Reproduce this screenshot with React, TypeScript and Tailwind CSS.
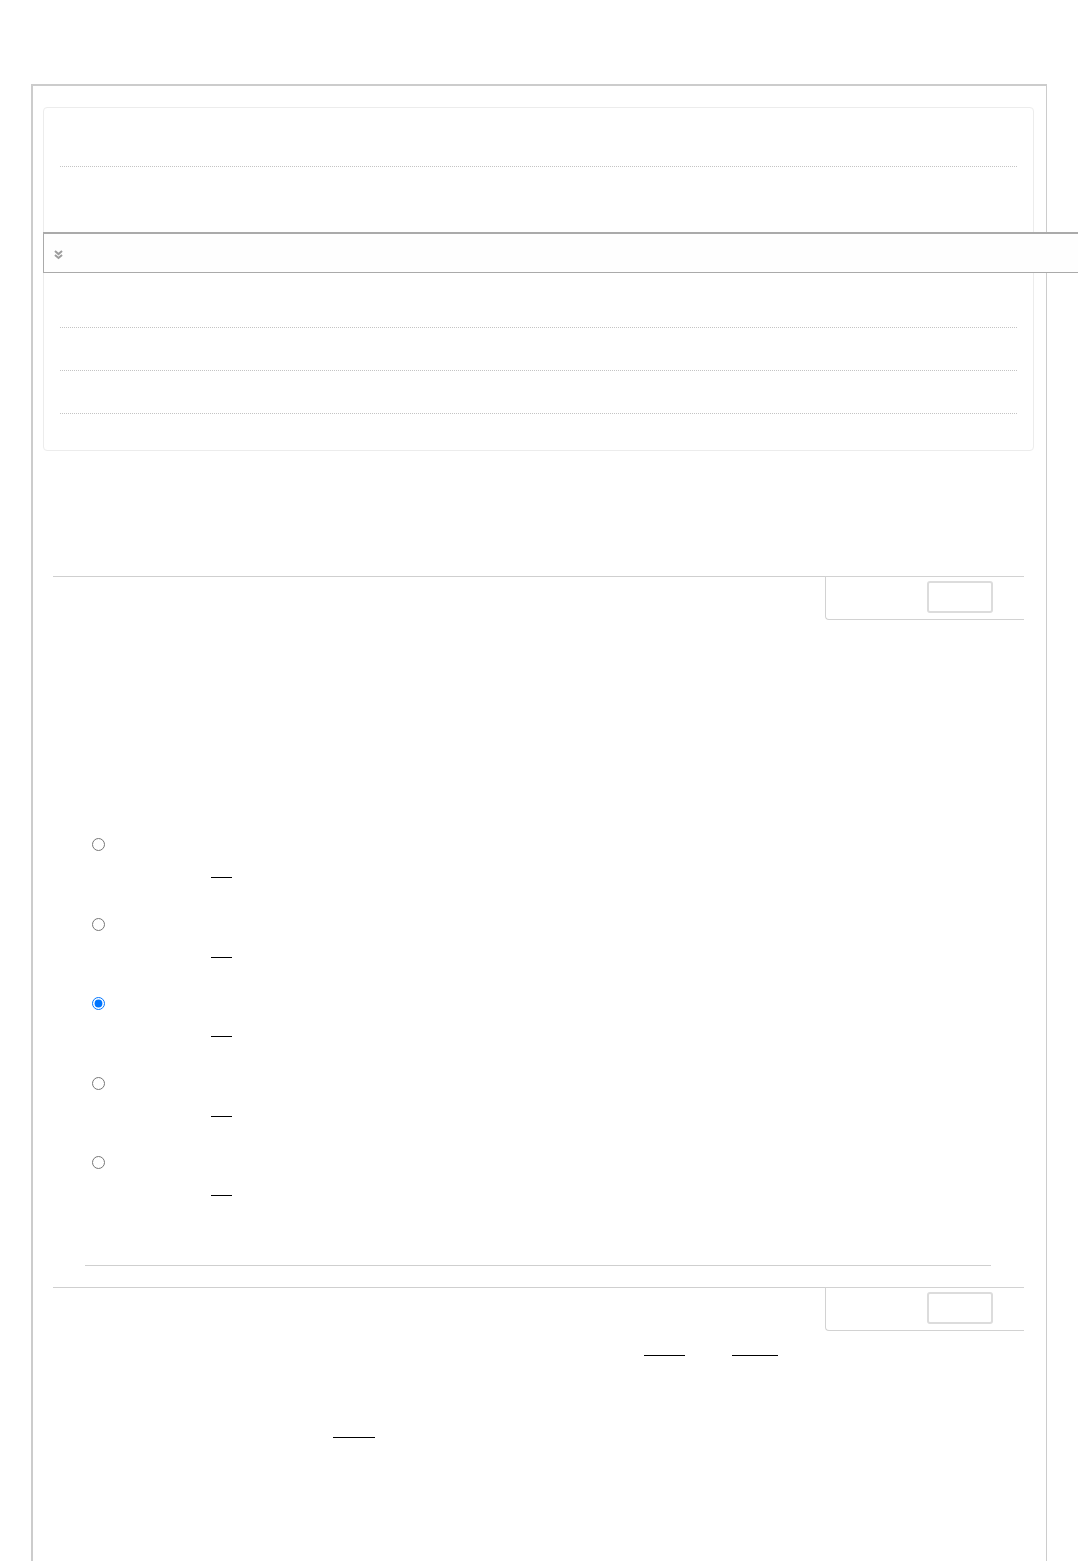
import React from 'react';

function Blank({ w }: { w: number }) {
  return <span className="inline-block h-[1px] bg-black align-bottom" style={{ width: w }} />;
}

function Tab() {
  return (
    <div className="flex h-[44px]">
      <div className="flex-1 border-t border-[#cfcfcf]" />
      <div className="w-[199px] h-[44px] border-t border-l border-b border-[#d2d2d2] rounded-bl-[4px] flex justify-end pr-[31px] pt-[4px]">
        <div className="w-[66px] h-[32px] border-2 border-[#dcdcdc] rounded-[3px]" />
      </div>
    </div>
  );
}

const options = [false, false, true, false, false];

export default function App() {
  return (
    <div className="relative min-h-[1561px] bg-white overflow-hidden" style={{ fontFamily: '"Liberation Sans", Arial, sans-serif' }}>
      <div className="ml-[31px] mt-[84px] w-[1016px] h-[1500px] border-t-2 border-l-2 border-r border-[#cccccc]">
        {/* summary card */}
        <div className="mt-[21px] ml-[10px] w-[991px] h-[344px] border border-[#ececec] rounded-[4px] px-[16px]">
          <div className="h-[59px] border-b border-dotted border-[#c4c4c4]" />
          <div className="h-[161px] border-b border-dotted border-[#c4c4c4]" />
          <div className="h-[43px] border-b border-dotted border-[#c4c4c4]" />
          <div className="h-[43px] border-b border-dotted border-[#c4c4c4]" />
        </div>

        {/* question 1 */}
        <div className="mt-[125px] ml-[20px] w-[971px]">
          <Tab />
          <div className="pt-[218px] pl-[39px]">
            {options.map((checked, i) => (
              <div key={i} className="h-[79.5px] flex">
                <input type="radio" name="q1" defaultChecked={checked} className="w-[13px] h-[13px] m-0" />
                <div className="pt-[16px] pl-[106px]">
                  <Blank w={21} />
                </div>
              </div>
            ))}
          </div>
          <div className="mt-[29px] ml-[32px] w-[906px] h-[1px] bg-[#cfcfcf]" />
        </div>

        {/* question 2 */}
        <div className="mt-[21px] ml-[20px] w-[971px]">
          <Tab />
          <div className="h-[24px]" />
          <div className="flex pl-[591px] h-[1px]">
            <Blank w={41} />
            <div className="w-[47px]" />
            <Blank w={46} />
          </div>
          <div className="mt-[81px] pl-[280px] flex">
            <Blank w={42} />
          </div>
        </div>
      </div>

      {/* floating toolbar */}
      <div className="absolute top-[232px] left-[43px] right-0 h-[41px] border-t-2 border-b border-l border-[#aaaaaa] bg-[#fefefe] flex items-center pl-[9px]">
        <svg width="11" height="11" viewBox="0 0 10 10" className="mt-[2px]">
          <path d="M1.8 1.8 L5 4.6 L8.2 1.8" fill="none" stroke="#9c9c9c" strokeWidth="1.8" />
          <path d="M1.8 5.4 L5 8.2 L8.2 5.4" fill="none" stroke="#9c9c9c" strokeWidth="1.8" />
        </svg>
      </div>
    </div>
  );
}
